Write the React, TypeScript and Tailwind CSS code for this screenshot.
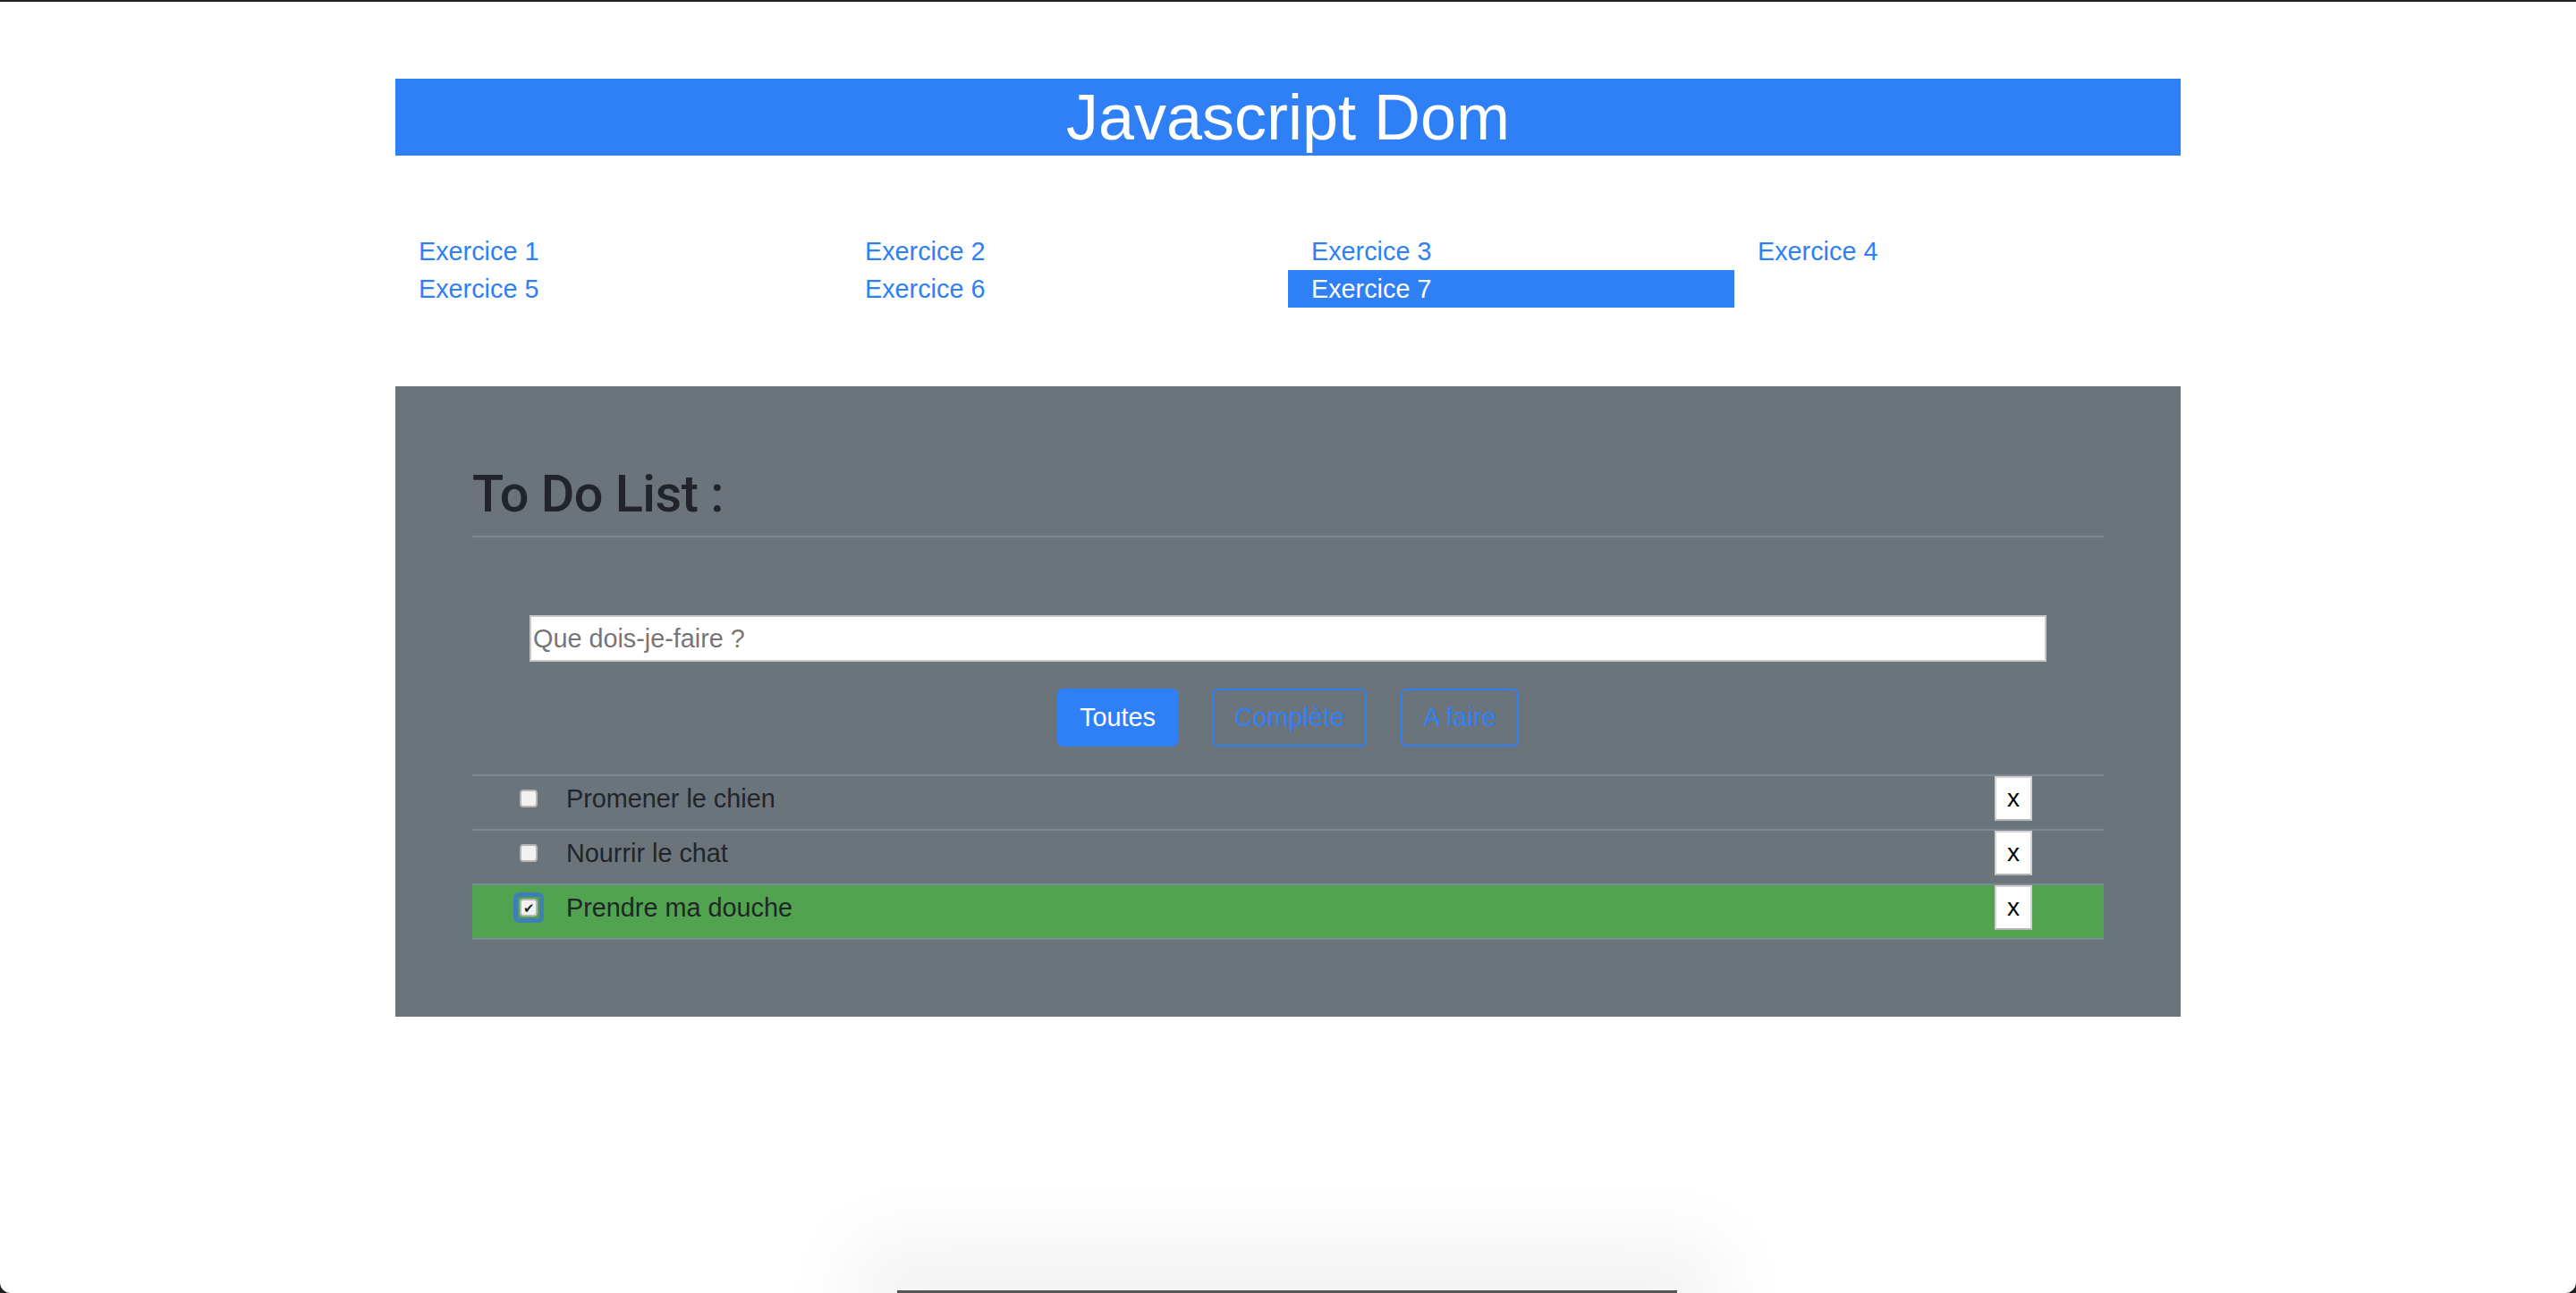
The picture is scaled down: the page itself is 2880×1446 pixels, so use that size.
import { useState } from 'react';

const exercices = [1, 2, 3, 4, 5, 6, 7];

const initialTodos = [
  { label: 'Promener le chien', done: false },
  { label: 'Nourrir le chat', done: false },
  { label: 'Prendre ma douche', done: true },
];

export default function App() {
  const [todos, setTodos] = useState(initialTodos);
  const [filter, setFilter] = useState('toutes');

  const toggle = (index: number) => {
    setTodos(todos.map((t, i) => (i === index ? { ...t, done: !t.done } : t)));
  };

  const remove = (index: number) => {
    setTodos(todos.filter((_, i) => i !== index));
  };

  const filters = [
    { key: 'toutes', label: 'Toutes' },
    { key: 'complete', label: 'Complète' },
    { key: 'afaire', label: 'A faire' },
  ];

  return (
    <div className="relative h-[1446px] overflow-hidden bg-[#1f1f1f] pt-[2px] font-['Liberation_Sans',Arial,sans-serif]">
      <div className="h-[1444px] rounded-b-[12px] bg-white">
        <div className="mx-auto w-[1996px] pt-[86px]">
          {/* Header */}
          <h1 className="flex h-[86px] items-center justify-center bg-[#2f80f6] text-[72px] leading-none text-white">
            Javascript Dom
          </h1>

          {/* Exercise links */}
          <nav className="mt-[86px] grid grid-cols-4">
            {exercices.map((n) => (
              <a
                key={n}
                href="#"
                className={
                  n === 7
                    ? 'h-[42px] bg-[#2f80f6] px-[26px] text-[28.8px] leading-[42px] text-white'
                    : 'h-[42px] px-[26px] text-[28.8px] leading-[42px] text-[#2f80f6]'
                }
              >
                Exercice {n}
              </a>
            ))}
          </nav>

          {/* To do panel */}
          <section className="mt-[88px] bg-[#6c747b] p-[86px]">
            <h2 className="mb-[12px] font-['Roboto',Arial,sans-serif] text-[57.6px] font-medium leading-[1.2] tracking-[-0.5px] text-[#212529]">
              To Do List :
            </h2>
            <hr className="h-[2px] border-0 bg-[#7e8896]" />

            <div className="mx-[64px] mt-[87px]">
              <input
                type="text"
                placeholder="Que dois-je-faire ?"
                className="block h-[52px] w-full border-2 border-[#c9c9c9] bg-white px-[2px] text-[28.8px] text-[#212529] outline-none placeholder:text-[#767676]"
              />
            </div>

            <div className="mt-[30px] flex justify-center gap-[38px]">
              {filters.map((f) => (
                <button
                  key={f.key}
                  onClick={() => setFilter(f.key)}
                  className={
                    filter === f.key
                      ? 'h-[65px] rounded-[6px] border-2 border-[#2f80f6] bg-[#2f80f6] px-[23px] text-[28.8px] text-white'
                      : 'h-[65px] rounded-[6px] border-2 border-[#2f80f6] px-[23px] text-[28.8px] text-[#2f80f6]'
                  }
                >
                  {f.label}
                </button>
              ))}
            </div>

            <ul className="mt-[31px] border-b-2 border-[#7e8896]">
              {todos.map((todo, index) => (
                <li
                  key={todo.label}
                  className={
                    todo.done
                      ? 'border-t-2 border-[#7e8896] bg-[#52a34f] pb-[9px]'
                      : 'border-t-2 border-[#7e8896] pb-[9px]'
                  }
                >
                  <div className="flex h-[50px] items-center pl-[53px] pr-[80px]">
                    <button
                      onClick={() => toggle(index)}
                      className={
                        todo.done
                          ? '-m-[7px] flex h-[34px] w-[34px] items-center justify-center rounded-[6px] border-[5px] border-[#3f7fb8]'
                          : 'flex h-[20px] w-[20px] items-center justify-center'
                      }
                    >
                      <span className="flex h-[20px] w-[20px] items-center justify-center rounded-[4px] border-2 border-[#b5b5b5] bg-[#f2f2f2] text-[15px] leading-none text-[#222]">
                        {todo.done ? '✔' : ''}
                      </span>
                    </button>
                    <span className="ml-[32px] flex-1 text-[28.8px] text-[#212529]">{todo.label}</span>
                    <button
                      onClick={() => remove(index)}
                      className="h-[50px] w-[42px] border-2 border-[#d2d2d2] border-b-[#b4b4b4] bg-white text-[28px] leading-none text-black"
                    >
                      x
                    </button>
                  </div>
                </li>
              ))}
            </ul>
          </section>
        </div>
      </div>

      {/* shadow of a bar sitting below the window edge */}
      <div className="absolute bottom-0 left-[1003px] h-[3px] w-[872px] bg-[#555] shadow-[0_0_90px_50px_rgba(0,0,0,0.06)]" />
    </div>
  );
}
